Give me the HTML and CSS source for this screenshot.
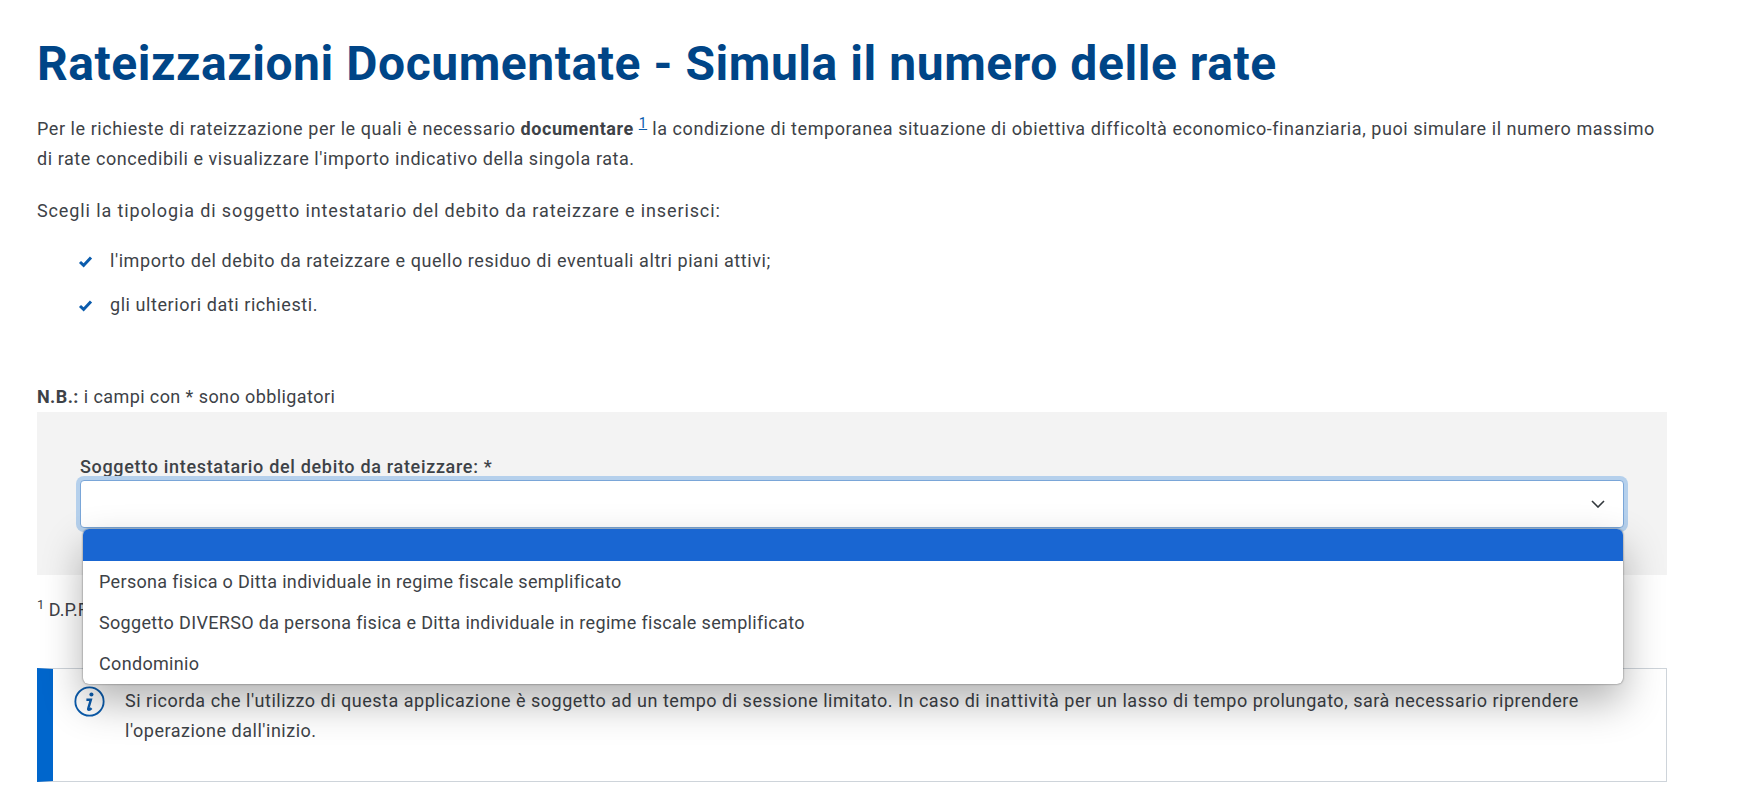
FILE: index.html
```html
<!DOCTYPE html>
<html lang="it">
<head>
    <meta charset="UTF-8">
    <meta name="viewport" content="width=device-width, initial-scale=1.0">
    <title>Rateizzazioni Documentate</title>
    <link rel="stylesheet" href="styles.css">
</head>
<body>
    <div class="page">
        <h1>Rateizzazioni Documentate - Simula il numero delle rate</h1>
        <p class="intro">Per le richieste di rateizzazione per le quali è necessario <strong>documentare</strong> <a class="note-link" href="#nota">1</a> la condizione di temporanea situazione di obiettiva difficoltà economico-finanziaria, puoi simulare il numero massimo di rate concedibili e visualizzare l'importo indicativo della singola rata.</p>
        <p class="choose">Scegli la tipologia di soggetto intestatario del debito da rateizzare e inserisci:</p>
        <ul class="checks">
            <li>
                <svg class="check" viewBox="0 0 15 13"><path d="M2 7 5.6 10.4 13 2.4" fill="none" stroke="#0b5cad" stroke-width="3"/></svg>
                l'importo del debito da rateizzare e quello residuo di eventuali altri piani attivi;
            </li>
            <li>
                <svg class="check" viewBox="0 0 15 13"><path d="M2 7 5.6 10.4 13 2.4" fill="none" stroke="#0b5cad" stroke-width="3"/></svg>
                gli ulteriori dati richiesti.
            </li>
        </ul>
        <p class="required"><strong>N.B.:</strong> i campi con * sono obbligatori</p>

        <!-- Form -->
        <div class="panel">
            <label class="field-label">Soggetto intestatario del debito da rateizzare: *</label>
            <div class="select-wrap">
                <div class="select">
                    <svg class="chevron" viewBox="0 0 14 8"><path d="M1 1 7 7 13 1" fill="none" stroke="#33383d" stroke-width="1.6"/></svg>
                </div>
                <ul class="options">
                    <li class="selected"></li>
                    <li>Persona fisica o Ditta individuale in regime fiscale semplificato</li>
                    <li>Soggetto DIVERSO da persona fisica e Ditta individuale in regime fiscale semplificato</li>
                    <li>Condominio</li>
                </ul>
            </div>
        </div>

        <p class="footnote" id="nota"><sup>1</sup> D.P.R. n. 602/1973</p>

        <div class="alert">
            <svg class="info" viewBox="0 0 32 32">
                <circle cx="16" cy="16" r="14.6" fill="none" stroke="#0b5cad" stroke-width="1.9"/>
                <circle cx="18" cy="8.8" r="2.1" fill="#0b5cad"/>
                <path d="M12.8 14.2h4.6l-2.7 9.2q-.3 1.2.8 1.1 1 0 2.6-1.7" fill="none" stroke="#0b5cad" stroke-width="2.5"/>
            </svg>
            <p>Si ricorda che l'utilizzo di questa applicazione è soggetto ad un tempo di sessione limitato. In caso di inattività per un lasso di tempo prolungato, sarà necessario riprendere l'operazione dall'inizio.</p>
        </div>
    </div>
</body>
</html>
```

FILE: styles.css
```css
html, body {
    margin: 0;
    padding: 0;
    background-color: #fff;
}
body {
    font-family: Roboto, "Noto Sans", sans-serif;
    font-size: 18px;
    line-height: 30px;
    color: #3d4247;
    overflow: hidden;
}
.page {
    width: 1630px;
    margin-left: 37px;
}
h1 {
    margin: 0;
    padding-top: 34px;
    font-size: 48px;
    line-height: 60px;
    font-weight: 700;
    letter-spacing: 0.55px;
    color: #004587;
}
p {
    margin: 0;
}
.intro {
    margin-top: 20px;
    letter-spacing: 0.56px;
}
.choose {
    margin-top: 22px;
    letter-spacing: 0.88px;
}
.note-link {
    color: #0b5cad;
    font-size: 14px;
    vertical-align: 7px;
    line-height: 0;
}
.checks {
    list-style: none;
    margin: 20px 0 0;
    padding: 0 0 0 41px;
    letter-spacing: 0.57px;
}
.checks li {
    display: flex;
    align-items: center;
    gap: 17px;
    height: 30px;
    margin-bottom: 14px;
}
.check {
    width: 15px;
    height: 13px;
}
.required {
    margin-top: 63px;
    height: 29px;
    line-height: 28px;
    letter-spacing: 0.42px;
}
.panel {
    background-color: #f3f3f3;
    height: 163px;
    padding: 42px 43px 0;
    box-sizing: border-box;
}
.field-label {
    display: block;
    font-weight: 500;
    line-height: 26px;
    letter-spacing: 0.68px;
}
.select-wrap {
    position: relative;
    z-index: 2;
}
.select {
    height: 48px;
    box-sizing: border-box;
    background-color: #fff;
    border: 1px solid #7aa6d8;
    border-radius: 4px;
    box-shadow: 0 0 0 4px #b5d0ec;
    display: flex;
    align-items: center;
    justify-content: flex-end;
    padding-right: 18px;
}
.chevron {
    width: 14px;
    height: 8px;
}
.options {
    position: absolute;
    top: 49px;
    left: 3px;
    right: 1px;
    margin: 0;
    padding: 0;
    list-style: none;
    background-color: #fff;
    border-radius: 6px;
    overflow: hidden;
    letter-spacing: 0.33px;
    box-shadow: 0 0 2px rgba(0, 0, 0, 0.6), 0 18px 40px rgba(0, 0, 0, 0.3);
}
.options li {
    height: 41px;
    line-height: 41px;
    padding-left: 16px;
}
.options .selected {
    height: 32px;
    background-color: #1966d2;
}
.footnote {
    margin-top: 20px;
    height: 73px;
}
.footnote sup {
    font-size: 13px;
    line-height: 0;
}
.alert {
    height: 114px;
    box-sizing: border-box;
    border: 1px solid #ced4da;
    border-left: 16px solid #0066cc;
    display: flex;
    align-items: flex-start;
    padding: 17px 60px 0 21px;
    gap: 20px;
    letter-spacing: 0.51px;
}
.info {
    flex: none;
    width: 31px;
    height: 31px;
}
```
